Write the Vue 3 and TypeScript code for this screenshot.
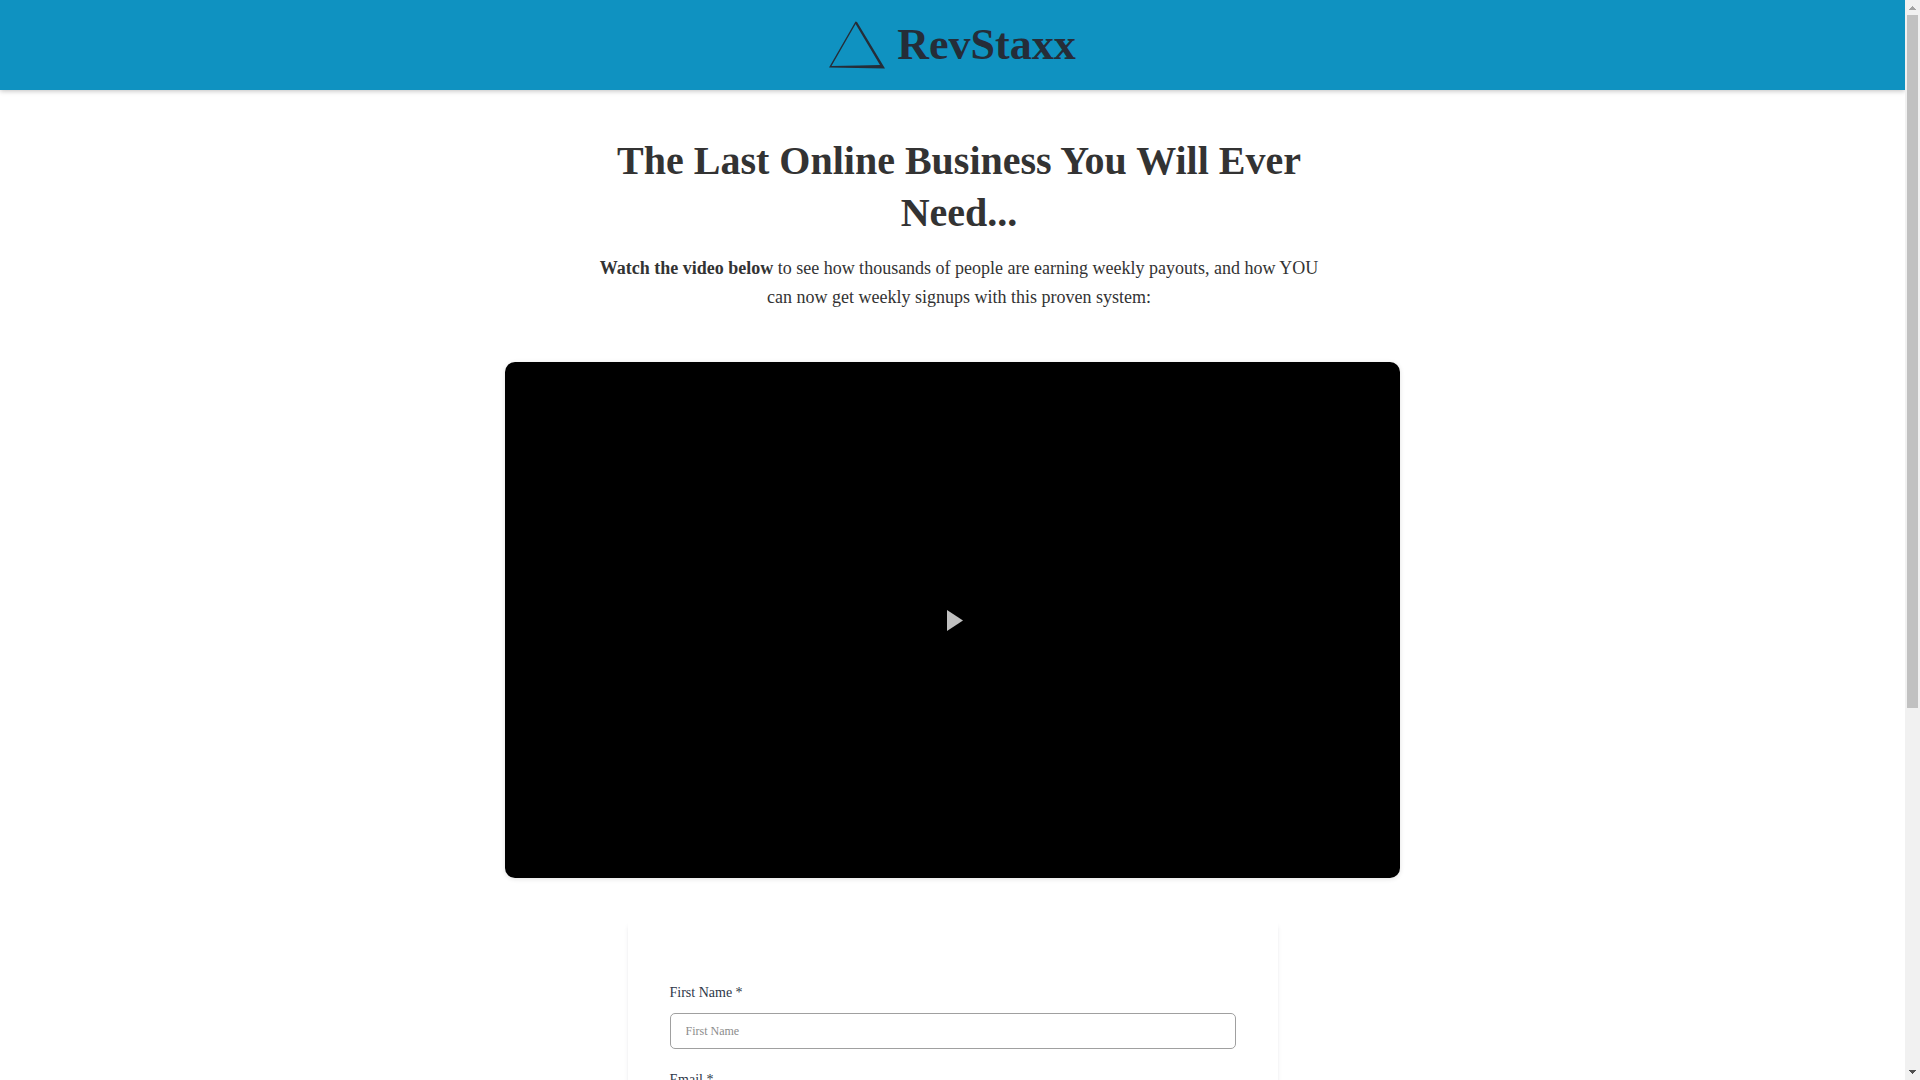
<script setup lang="ts">
import { ref } from 'vue'

interface Field {
  id: string
  label: string
  type: string
}

const fields: Field[] = [
  { id: 'first-name', label: 'First Name', type: 'text' },
  { id: 'email', label: 'Email', type: 'email' },
]

const values = ref<Record<string, string>>({})
</script>

<template>
  <div class="viewport">
    <div class="page">
      <header class="header">
        <a class="logo" href="#" aria-label="RevStaxx">
          <svg class="logo-mark" viewBox="0 0 56 48" aria-hidden="true">
            <path
              fill-rule="evenodd"
              d="M26.5 0.5 L28 1 L56 47.5 L28 47 L0 46.5 Z M26.6 3 L2.5 45 L30 44.6 L51 44 Z"
            />
          </svg>
          <span class="logo-text">RevStaxx</span>
        </a>
      </header>

      <main class="main">
        <section class="intro">
          <h1>The Last Online Business You Will Ever Need...</h1>
          <p>
            <strong>Watch the video below</strong> to see how thousands of people are earning weekly
            payouts, and how YOU can now get weekly signups with this proven system:
          </p>
        </section>

        <section class="video">
          <button class="play" type="button" aria-label="Play video">
            <svg viewBox="0 0 16 21" aria-hidden="true"><path d="M0 0 L16 10.5 L0 21 Z" /></svg>
          </button>
        </section>

        <form class="card" @submit.prevent>
          <div v-for="field in fields" :key="field.id" class="field">
            <label :for="field.id">{{ field.label }} *</label>
            <input
              :id="field.id"
              v-model="values[field.id]"
              :type="field.type"
              :placeholder="field.label"
            />
          </div>
        </form>
      </main>
    </div>

    <div class="scrollbar" aria-hidden="true">
      <svg class="arrow up" viewBox="0 0 7 4" shape-rendering="crispEdges"><path d="M0 4 L3 0 H4 L7 4 Z" /></svg>
      <div class="track"><div class="thumb"></div></div>
      <svg class="arrow down" viewBox="0 0 7 4" shape-rendering="crispEdges"><path d="M0 0 H7 L4 4 H3 Z" /></svg>
    </div>
  </div>
</template>

<style>
body {
  margin: 0;
  background: #fff;
}
</style>

<style scoped>
.viewport {
  display: flex;
  height: 100vh;
  overflow: hidden;
  font-family: 'Liberation Serif', 'Times New Roman', serif;
  color: #333;
}

.page {
  flex: 1;
  min-width: 0;
  overflow: hidden;
}

.header {
  position: relative;
  display: flex;
  justify-content: center;
  align-items: center;
  height: 90px;
  background: #0f92c1;
  box-shadow: 0 1px 5px rgba(0, 0, 0, 0.25);
}

.logo {
  display: flex;
  align-items: center;
  gap: 12px;
  color: #252d38;
  text-decoration: none;
}

.logo-mark {
  width: 56px;
  height: 48px;
  fill: currentColor;
}

.logo-text {
  font-size: 44px;
  font-weight: 700;
  line-height: 50px;
}

.main {
  display: flex;
  flex-direction: column;
  align-items: center;
  padding-top: 45px;
}

.intro {
  box-sizing: border-box;
  width: 100%;
  max-width: 745px;
  padding-left: 13px;
  text-align: center;
}

.intro h1 {
  margin: 0;
  font-size: 40px;
  line-height: 52px;
}

.intro p {
  margin: 15px 0 0;
  font-size: 18px;
  line-height: 29px;
}

.video {
  display: flex;
  justify-content: center;
  align-items: center;
  width: 100%;
  max-width: 895px;
  height: 516px;
  margin-top: 50px;
  border-radius: 10px;
  background: #000;
  box-shadow: 0 1px 5px rgba(0, 0, 0, 0.12);
}

.play {
  display: flex;
  padding: 0 0 0 4px;
  border: 0;
  background: none;
  cursor: pointer;
}

.play svg {
  width: 16px;
  height: 21px;
  fill: #c0c0c0;
}

.card {
  box-sizing: border-box;
  width: 100%;
  max-width: 650px;
  margin-top: 42px;
  padding: 63px 42px 42px;
  background: #fff;
  box-shadow: 0 5px 5px -2px rgba(50, 50, 93, 0.25);
}

.field {
  display: flex;
  flex-direction: column;
  gap: 10px;
  margin-bottom: 21px;
}

.field label {
  font-size: 14px;
  line-height: 20px;
  color: #2d3748;
}

.field input {
  box-sizing: border-box;
  width: 100%;
  height: 36px;
  padding: 0 15px;
  border: 1px solid #a0a0a0;
  border-radius: 5px;
  background: #fff;
  font-family: inherit;
  font-size: 12px;
  color: #333;
}

.field input::placeholder {
  color: #8c8c8c;
}

.scrollbar {
  display: flex;
  flex-direction: column;
  align-items: center;
  box-sizing: border-box;
  width: 15px;
  padding: 6px 0;
  background: #f1f1f1;
}

.arrow {
  width: 7px;
  height: 4px;
}

.up {
  fill: #a3a3a3;
}

.down {
  fill: #505050;
}

.track {
  flex: 1;
  width: 11px;
  margin: 5px 0;
}

.thumb {
  height: 66%;
  background: #c1c1c1;
}
</style>
